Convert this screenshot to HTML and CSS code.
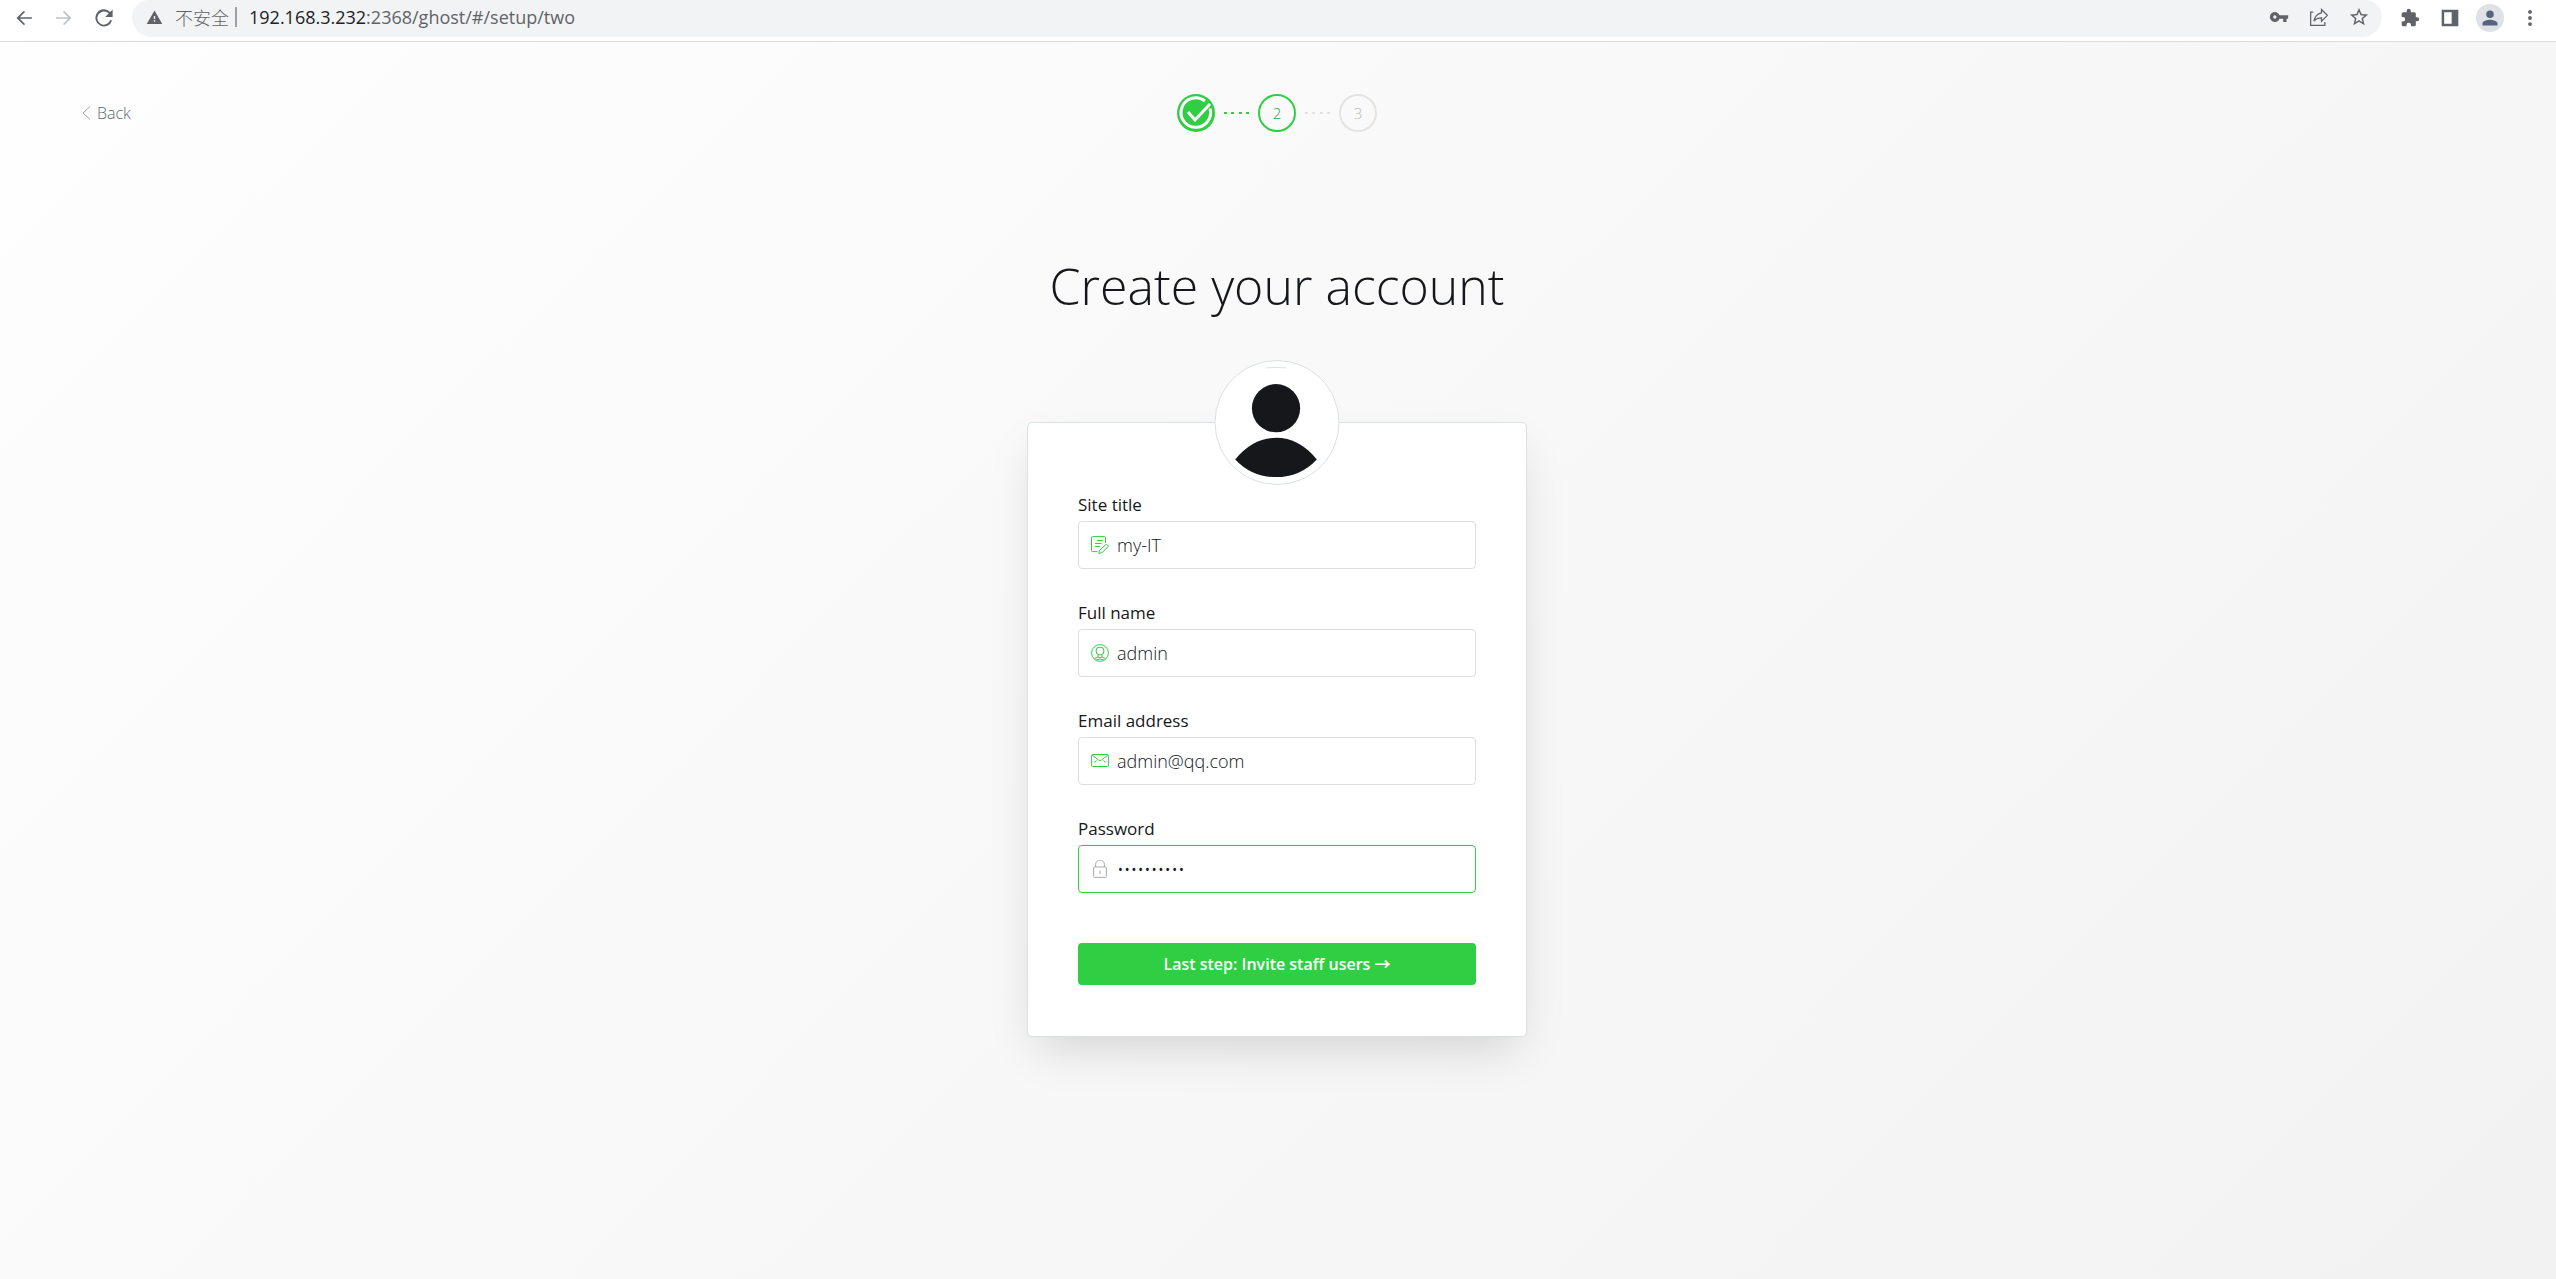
FILE: index.html
```html
<!DOCTYPE html>
<html lang="en">
<head>
    <meta charset="UTF-8">
    <meta name="viewport" content="width=device-width, initial-scale=1.0">
    <title>Setup - Ghost</title>
    <link rel="stylesheet" href="styles.css">
</head>
<body>
    <header class="toolbar">
        <div class="nav-buttons">
            <button type="button" aria-label="Go back">
                <svg viewBox="0 0 24 24"><path d="M21.500 11H7l6.200-6.200L12 3.400 3 12l9 8.600 1.200-1.400L7 13h14.500z"/></svg>
            </button>
            <button type="button" aria-label="Go forward" disabled>
                <svg viewBox="0 0 24 24"><path d="M2.500 11H17l-6.200-6.200L12 3.400 21 12l-9 8.600-1.200-1.400L17 13H2.500z"/></svg>
            </button>
            <button type="button" aria-label="Reload">
                <svg viewBox="1 1 22 22"><path d="M18.700 5.300A9.400 9.400 0 1 0 21 14.500h-2.300A7.200 7.200 0 1 1 12 4.900c2 0 3.800.8 5.100 2.100L13.200 11H21.500V2.600z"/></svg>
            </button>
        </div>
        <div class="omnibox">
            <svg class="warning" viewBox="0 0 24 24"><path d="M1 21h22L12 2zm12-3h-2v-2h2zm0-4h-2v-4h2z"/></svg>
            <span class="insecure">不安全</span>
            <span class="separator"></span>
            <span class="url"><b>192.168.3.232</b>:2368/ghost/#/setup/two</span>
            <div class="page-actions">
                <button type="button" aria-label="Passwords">
                    <svg viewBox="0 0 24 24"><path d="M12.650 10A6 6 0 1 0 12.650 14H17v4h4v-4h2v-4zM7 14a2 2 0 1 1 0-4 2 2 0 0 1 0 4z"/></svg>
                </button>
                <button type="button" aria-label="Share">
                    <svg class="line" viewBox="0 0 24 24"><path d="M5 6H2v16h17v-4M15 3l7 7-7 7v-4c-4 0-7 1-9 4 1-6 4-9 9-10z"/></svg>
                </button>
                <button type="button" aria-label="Bookmark">
                    <svg viewBox="1 1 22 22"><path d="M22 9.240l-7.190-.62L12 2 9.190 8.630 2 9.240l5.460 4.730L5.820 21 12 17.270 18.180 21l-1.630-7.030zM12 15.400l-3.760 2.270 1-4.280-3.320-2.880 4.380-.38L12 6.100l1.710 4.040 4.380.38-3.320 2.880 1 4.280z"/></svg>
                </button>
            </div>
        </div>
        <div class="browser-actions">
            <button type="button" aria-label="Extensions">
                <svg viewBox="0 0 24 24"><path d="M20.500 11H19V7a2 2 0 0 0-2-2h-4V3.500a2.500 2.500 0 0 0-5 0V5H4a2 2 0 0 0-2 2v3.800h1.500a2.700 2.700 0 0 1 0 5.400H2V20a2 2 0 0 0 2 2h3.800v-1.500a2.700 2.700 0 0 1 5.400 0V22H17a2 2 0 0 0 2-2v-4h1.500a2.500 2.500 0 0 0 0-5z"/></svg>
            </button>
            <button type="button" aria-label="Side panel">
                <svg viewBox="0 0 24 24"><path d="M2 2h20v20H2zM5 5v14h9V5z"/></svg>
            </button>
            <button type="button" class="profile" aria-label="Profile">
                <svg viewBox="0 0 24 24"><path d="M12 12a4.500 4.500 0 1 0 0-9 4.500 4.500 0 0 0 0 9zm0 2c-3 0-9 1.500-9 4.500V21h18v-2.500c0-3-6-4.500-9-4.500z"/></svg>
            </button>
            <button type="button" aria-label="Menu">
                <svg viewBox="0 0 24 24"><path d="M12 7a2.300 2.300 0 1 0 0-4.600A2.300 2.300 0 0 0 12 7zm0 2.700a2.300 2.300 0 1 0 0 4.600 2.300 2.300 0 0 0 0-4.600zm0 7.300a2.300 2.300 0 1 0 0 4.600 2.300 2.300 0 0 0 0-4.600z"/></svg>
            </button>
        </div>
    </header>

    <div class="setup">
        <nav class="setup-nav">
            <a href="#/setup/one" class="back">
                <svg viewBox="0 0 9 16"><path d="M8 1.500L1 8l7 6.500"/></svg>
                Back
            </a>
            <ol class="steps">
                <li class="step done">
                    <svg viewBox="0 0 38 38">
                        <circle cx="19" cy="19" r="19" fill="#30cf43"/>
                        <path d="M28 7A14.800 14.800 0 1 0 33 14.500M11 18l7 8L33 10"/>
                    </svg>
                </li>
                <li class="dots active"><i></i><i></i><i></i><i></i></li>
                <li class="step active">2</li>
                <li class="dots"><i></i><i></i><i></i><i></i></li>
                <li class="step">3</li>
            </ol>
        </nav>

        <main>
            <h1>Create your account</h1>
            <form class="card">
                <div class="avatar">
                    <svg viewBox="0 0 125 125">
                        <path d="M51 7q10-1 21 0" stroke="#dae1e3" fill="none"/>
                        <circle cx="61.500" cy="48" r="24.500"/>
                        <path d="M20 100Q38 78 61.500 78T103 100Q86 118 61.500 118T20 100z"/>
                    </svg>
                </div>
                <div class="form-group">
                    <label for="blog-title">Site title</label>
                    <div class="input-icon">
                        <svg viewBox="0 0 18 18"><path d="M14.500 7V1.600q0-1-1-1h-12q-1 0-1 1v13q0 1 1 1H6.500M6 4.500h5.500M4 7.500h6.500M4 10.500h5M8.500 14.200l6.200-5.500q1-.6 2 .4t.2 2l-6 5.500-3 .9z"/></svg>
                        <input type="text" id="blog-title" name="blog-title" value="my-IT">
                    </div>
                </div>
                <div class="form-group">
                    <label for="name">Full name</label>
                    <div class="input-icon">
                        <svg viewBox="0 0 18 18"><circle cx="9" cy="9" r="8.400"/><circle cx="9" cy="7" r="4"/><path d="M7 11v2l-3.500 1.500M11 11v2l3.500 1.500M7 13q2 1.500 4 0M5 16q4-2 8 0"/></svg>
                        <input type="text" id="name" name="name" value="admin">
                    </div>
                </div>
                <div class="form-group">
                    <label for="email">Email address</label>
                    <div class="input-icon">
                        <svg viewBox="0 0 18 18"><rect x=".6" y="2.500" width="16.800" height="12" rx="1"/><path d="M1 3l6.500 5q1.500 1 3 0L17 3M3 10.500l2.500-2M15 10.500l-2.500-2"/></svg>
                        <input type="email" id="email" name="email" value="admin@qq.com">
                    </div>
                </div>
                <div class="form-group">
                    <label for="password">Password</label>
                    <div class="input-icon focused">
                        <svg viewBox="0 0 18 18"><rect x="2.600" y="7" width="12.800" height="10.400" rx="1"/><path d="M4.600 7V4.500a4.400 4.400 0 0 1 8.800 0V7M9 10.500v3.500"/></svg>
                        <input type="password" id="password" name="password" value="adminadmin">
                    </div>
                </div>
                <button type="submit" class="submit">Last step: Invite staff users →</button>
            </form>
        </main>
    </div>
</body>
</html>
```
FILE: styles.css
```css
* {
    box-sizing: border-box;
}
body {
    display: flex;
    flex-direction: column;
    min-height: 100vh;
    margin: 0;
    font-family: "Open Sans", "Noto Sans", "Noto Sans CJK SC", sans-serif;
    font-size: 18px;
    color: #15171a;
}
button {
    padding: 0;
    border: none;
    background: none;
    font: inherit;
    cursor: pointer;
}

/* Browser toolbar */
.toolbar {
    display: flex;
    height: 42px;
    border-bottom: 1px solid #d9dadc;
    background: #fff;
    color: #5f6368;
}
.toolbar button {
    display: flex;
    align-items: center;
    justify-content: center;
    width: 40px;
    height: 35px;
    color: #5f6368;
}
.toolbar svg {
    width: 20px;
    height: 20px;
    fill: currentColor;
}
.toolbar button:disabled {
    color: #bdc1c6;
}
.nav-buttons {
    display: flex;
    padding: 0 8px 0 4px;
}
.omnibox {
    display: flex;
    flex: 1;
    align-items: center;
    height: 37px;
    padding: 0 3px 3px 14px;
    border-radius: 17px 17px 20px 20px;
    background: #f1f3f4;
}
.omnibox .warning {
    width: 17px;
    height: 17px;
}
.toolbar .line {
    fill: none;
    stroke: currentColor;
    stroke-width: 1.5;
}
.insecure {
    margin-left: 12px;
    font-family: "Noto Sans CJK SC", sans-serif;
    font-weight: 300;
    line-height: 24px;
}
.separator {
    width: 2px;
    height: 20px;
    margin: 0 12px 0 6px;
    background: #9aa0a6;
}
.url {
    line-height: 24px;
}
.url b {
    font-weight: 400;
    color: #202124;
}
.page-actions {
    display: flex;
    margin-left: auto;
}
.browser-actions {
    display: flex;
    padding: 0 6px 0 8px;
}
.toolbar .profile {
    width: 28px;
    height: 28px;
    margin: 4px 6px;
    border-radius: 50%;
    background: #dee1e6;
    color: #56637a;
}

/* Setup screen */
.setup {
    flex: 1;
    padding-right: 2px;
    background: linear-gradient(135deg, #fefefe, #f2f2f2);
}
.setup-nav {
    display: grid;
    grid-template-columns: 1fr auto 1fr;
    align-items: center;
    padding: 52px 80px 0;
}
.back {
    display: flex;
    align-items: center;
    gap: 6px;
    padding-left: 2px;
    font-size: 16px;
    font-weight: 300;
    line-height: 22px;
    color: #5b6b72;
    text-decoration: none;
}
.back svg {
    width: 9px;
    height: 16px;
    fill: none;
    stroke: #a0a8ab;
}
.steps {
    display: flex;
    align-items: center;
    margin: 0;
    padding: 0;
    list-style: none;
}
.step {
    display: flex;
    align-items: center;
    justify-content: center;
    width: 38px;
    height: 38px;
    border: 2px solid #e3e3e3;
    border-radius: 50%;
    font-size: 15px;
    font-weight: 300;
    color: #b8b8b8;
}
.step.active {
    border-color: #30cf43;
    color: #26a736;
}
.step.done {
    border: none;
}
.step svg {
    width: 38px;
    height: 38px;
    fill: none;
    stroke: #fff;
    stroke-width: 3;
}
.step circle {
    stroke: none;
}
.dots {
    display: flex;
    justify-content: space-between;
    width: 25px;
    margin: 0 9px;
}
.dots i {
    width: 3px;
    height: 2px;
    background: #e3e3e3;
}
.dots.active i {
    background: #30cf43;
}
main {
    display: flex;
    flex-direction: column;
    align-items: center;
}
h1 {
    margin: 118px 0 100px;
    font-size: 50px;
    font-weight: 300;
    line-height: 72px;
}
.card {
    position: relative;
    width: 500px;
    padding: 68px 50px 50px;
    border: 1px solid #dae1e3;
    border-radius: 5px;
    background: #fff;
    box-shadow: 0 20px 45px -10px rgba(0, 0, 0, 0.15);
}
.avatar {
    position: absolute;
    top: -63px;
    left: 50%;
    width: 125px;
    height: 125px;
    border: 1px solid #dae1e3;
    border-radius: 50%;
    background: #fff;
    transform: translateX(-50%);
    overflow: hidden;
}
.avatar svg {
    display: block;
    fill: #15171a;
}
.form-group {
    margin-bottom: 30px;
}
.form-group label {
    display: block;
    margin-bottom: 4px;
    padding-top: 2px;
    font-size: 17px;
    line-height: 24px;
}
.input-icon {
    display: flex;
    align-items: center;
    height: 48px;
    padding-left: 12px;
    border: 1px solid #dddedf;
    border-radius: 4px;
    background: #fff;
}
.input-icon.focused {
    border-color: #30cf43;
}
.input-icon svg {
    width: 18px;
    height: 18px;
    fill: none;
    stroke: #30cf43;
}
.input-icon.focused svg {
    stroke: #a9a9a9;
}
.input-icon input {
    flex: 1;
    min-width: 0;
    padding: 0 8px;
    border: none;
    outline: none;
    background: none;
    font: inherit;
    font-weight: 300;
    color: #15171a;
}
.submit {
    display: block;
    width: 100%;
    height: 42px;
    margin: 50px 0 1px;
    border-radius: 4px;
    background: #30cf43;
    font-size: 16px;
    font-weight: 600;
    line-height: 40px;
    color: #fff;
}
```
